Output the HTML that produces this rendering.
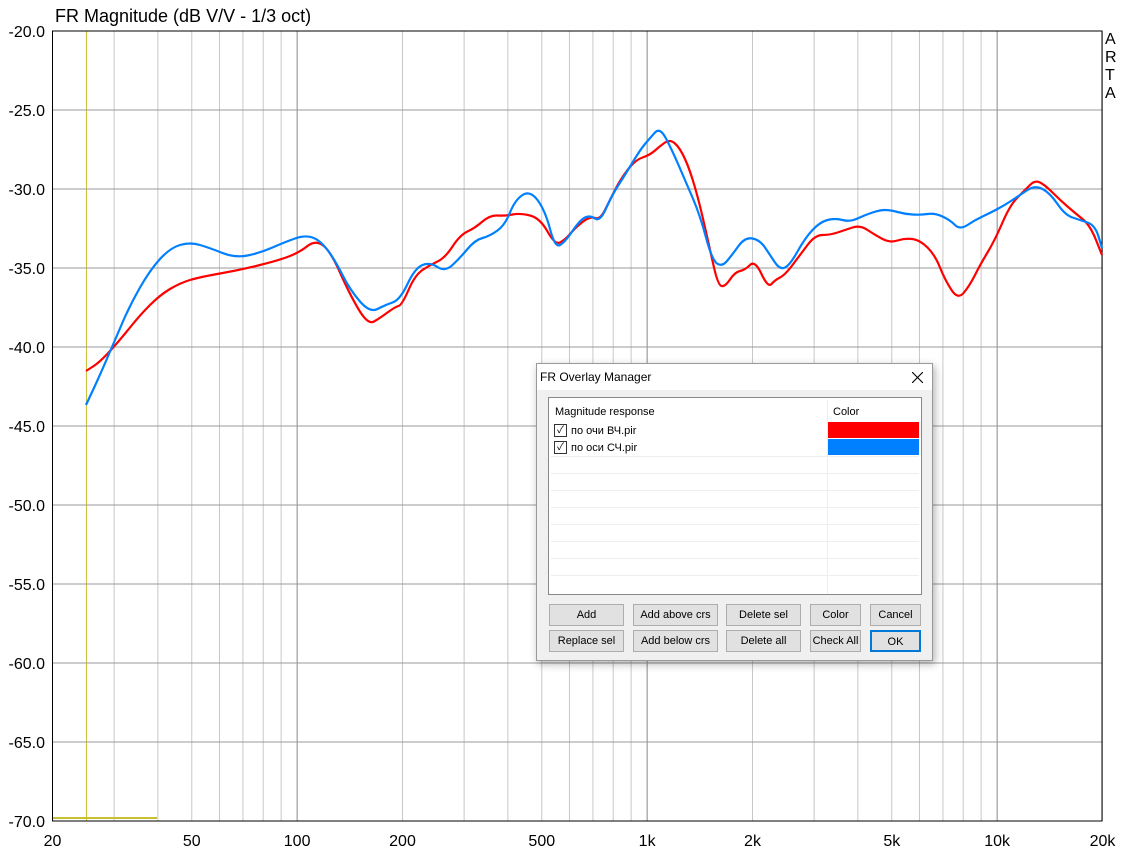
<!DOCTYPE html><html><head><style>
body{margin:0;width:1125px;height:852px;background:#fff;font-family:"Liberation Sans",sans-serif;position:relative;overflow:hidden}
.t{position:absolute;font-size:16px;color:#000}
.dlg{position:absolute;left:536px;top:363px;width:395px;height:296px;background:#f0f0f0;border:1px solid #999;box-shadow:2px 3px 8px rgba(0,0,0,.3);font-size:11px;font-family:"Liberation Sans","Noto Sans CJK SC",sans-serif}
.btn{position:absolute;height:20px;background:#e1e1e1;border:1px solid #adadad;text-align:center;line-height:20px;font-size:11px}
</style></head><body>
<svg width="1125" height="852" style="position:absolute;left:0;top:0">
<g id="g"></g>
</svg>
<div class="t" style="left:55px;top:6px;font-size:18px">FR Magnitude (dB V/V - 1/3 oct)</div>
<div class="t" style="left:1105px;top:31px;line-height:18px;font-size:16px">A<br>R<br>T<br>A</div>
<div class="dlg">
<div style="position:absolute;left:0;top:0;right:0;height:26px;background:#fff;font-size:12px;line-height:26px;padding-left:3px">FR Overlay Manager<svg style="position:absolute;right:9px;top:8px" width="11" height="11"><path d="M0,0L11,11M11,0L0,11" stroke="#000" stroke-width="1.1"/></svg></div>
<div style="position:absolute;left:11px;top:33px;width:372px;height:196px;background:#fff;border:1px solid #888">
<div style="position:absolute;left:6px;top:8px">Magnitude response</div>
<div style="position:absolute;left:284px;top:8px">Color</div>
<div style="position:absolute;left:278px;top:2px;width:1px;height:194px;background:#eee"></div>
<div style="position:absolute;left:279px;top:24px;width:91px;height:16px;background:#f00"></div>
<div style="position:absolute;left:279px;top:41px;width:91px;height:16px;background:#0080ff"></div>
<div style="position:absolute;left:5px;top:26px;width:11px;height:11px;border:1px solid #333;font-size:10px;line-height:11px;text-align:center">✓</div>
<div style="position:absolute;left:22px;top:27px">по очи ВЧ.pir</div>
<div style="position:absolute;left:5px;top:43px;width:11px;height:11px;border:1px solid #333;font-size:10px;line-height:11px;text-align:center">✓</div>
<div style="position:absolute;left:22px;top:44px">по оси СЧ.pir</div>
<div id="rows"></div>
</div>
<div class="btn" style="left:12px;top:240px;width:73px">Add</div>
<div class="btn" style="left:96px;top:240px;width:83px">Add above crs</div>
<div class="btn" style="left:189px;top:240px;width:73px">Delete sel</div>
<div class="btn" style="left:273px;top:240px;width:49px">Color</div>
<div class="btn" style="left:333px;top:240px;width:49px">Cancel</div>
<div class="btn" style="left:12px;top:266px;width:73px">Replace sel</div>
<div class="btn" style="left:96px;top:266px;width:83px">Add below crs</div>
<div class="btn" style="left:189px;top:266px;width:73px">Delete all</div>
<div class="btn" style="left:273px;top:266px;width:49px">Check All</div>
<div class="btn" style="left:333px;top:266px;width:47px;height:18px;border:2px solid #0078d7">OK</div>
</div>
<script>
var s='',L=52.5,R=1102,T=31,B=821;
function fx(f){return L+Math.log10(f/20)*350;}
for(var d=10;d<=10000;d*=10)for(var m=1;m<=9;m++){var f=d*m;if(f<20||f>20000)continue;var x=fx(f);var dark=(m==1);s+='<line x1="'+x+'" y1="'+T+'" x2="'+x+'" y2="'+B+'" stroke="'+(dark?'#888':'#c8c8c8')+'" stroke-width="1"/>';}
s+='<line x1="'+fx(25)+'" y1="'+T+'" x2="'+fx(25)+'" y2="'+B+'" stroke="#c8c030"/>';
for(var i=0;i<=10;i++){var y=T+i*79;s+='<line x1="'+L+'" y1="'+y+'" x2="'+R+'" y2="'+y+'" stroke="#999"/>';s+='<text x="45" y="'+(y+6)+'" text-anchor="end" font-size="16" font-family="Liberation Sans">'+(-20-5*i).toFixed(1)+'</text>';}
var lb=[[20,'20'],[50,'50'],[100,'100'],[200,'200'],[500,'500'],[1000,'1k'],[2000,'2k'],[5000,'5k'],[10000,'10k'],[20000,'20k']];
lb.forEach(function(a){s+='<text x="'+fx(a[0])+'" y="846" text-anchor="middle" font-size="16" font-family="Liberation Sans">'+a[1]+'</text>';});
s+='<rect x="'+L+'" y="'+T+'" width="'+(R-L)+'" height="'+(B-T)+'" fill="none" stroke="#000"/>';
s+='<line x1="53" y1="818" x2="157" y2="818" stroke="#c8c030" stroke-width="2"/>';
function path(p,c){var d='M'+p[0][0]+','+p[0][1];for(var i=1;i<p.length;i++){var a=p[i-1],b=p[i];var mx=(a[0]+b[0])/2;d+=' Q'+a[0]+','+a[1]+' '+mx+','+(a[1]+b[1])/2;}d+=' L'+p[p.length-1][0]+','+p[p.length-1][1];return '<path d="'+d+'" fill="none" stroke="'+c+'" stroke-width="2.2"/>';}
var red=[[86,371],[100,362],[120,340],[140,315],[160,295],[180,283],[200,277],[240,270],[280,260],[300,252],[315,240],[330,250],[350,295],[368,325],[380,318],[395,307],[402,305],[415,275],[430,265],[445,258],[460,235],[475,228],[490,215],[505,216],[520,213],[540,218],[555,245],[565,240],[575,228],[590,216],[600,220],[610,200],[620,180],[635,160],[650,155],[660,146],[670,139],[680,148],[690,170],[700,205],[710,250],[718,285],[725,287],[735,272],[745,270],[755,260],[768,288],[775,280],[785,275],[800,255],[815,235],[830,235],[845,230],[860,225],[875,235],[890,243],[905,238],[920,240],[935,255],[945,280],[958,300],[970,285],[980,265],[995,240],[1010,205],[1025,190],[1035,180],[1045,185],[1060,200],[1075,213],[1090,225],[1102,255]];
var blue=[[86,405],[100,375],[115,340],[130,305],[150,270],[170,248],[190,242],[210,248],[235,258],[260,253],[285,242],[305,235],[320,240],[335,260],[350,290],[370,313],[385,305],[400,300],[415,268],[430,262],[445,272],[460,258],[475,240],[490,236],[505,225],[515,200],[530,190],[545,210],[555,248],[565,242],[580,220],[590,215],[600,222],[612,195],[625,175],[640,150],[650,138],[660,127],[672,150],[685,180],[700,215],[712,260],[722,267],[732,255],[745,237],[760,240],[770,255],[780,270],[790,265],[805,238],[820,222],[835,218],[850,222],[865,215],[880,210],[890,210],[905,214],[920,215],[935,213],[950,220],[960,230],[975,220],[990,213],[1005,205],[1020,195],[1035,185],[1050,193],[1065,215],[1080,220],[1095,225],[1102,248]];
s+=path(red,'#f00')+path(blue,'#0080ff');
document.getElementById('g').innerHTML=s;
var r='';for(var i=0;i<8;i++){r+='<div style="position:absolute;left:2px;right:2px;top:'+(58+i*17)+'px;height:1px;background:#eee"></div>';}
document.getElementById('rows').innerHTML=r;
</script>
</body></html>
